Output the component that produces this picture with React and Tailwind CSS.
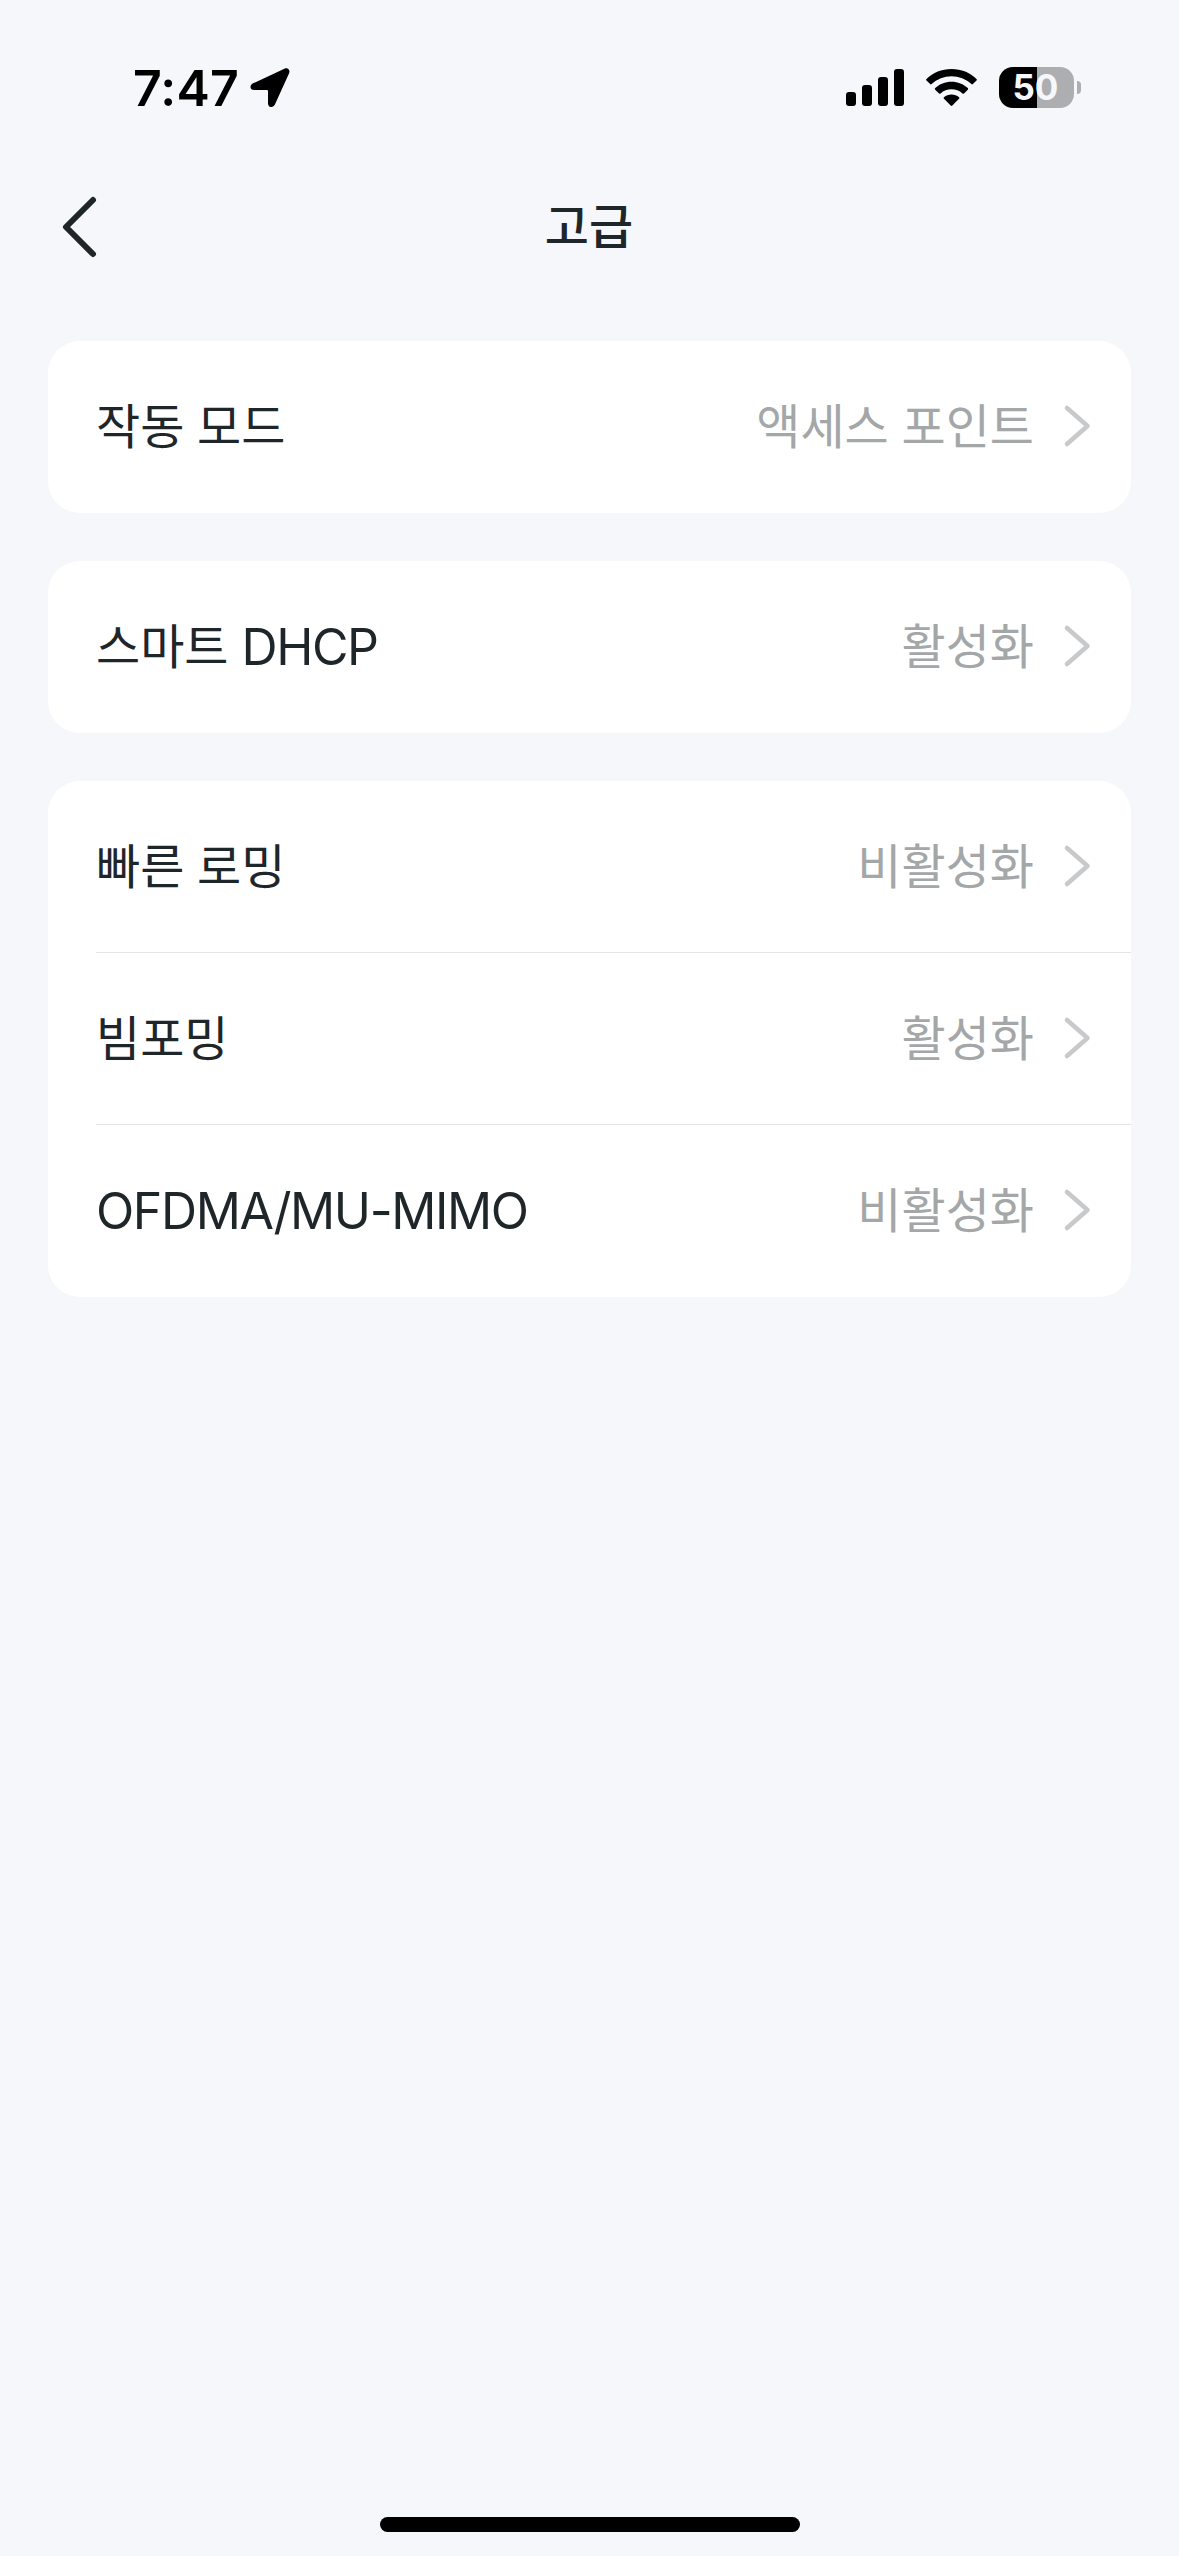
import React from 'react';

const groups = [
  [{ label: '작동 모드', value: '액세스 포인트' }],
  [{ label: '스마트', latin: 'DHCP', value: '활성화' }],
  [
    { label: '빠른 로밍', value: '비활성화' },
    { label: '빔포밍', value: '활성화' },
    { latin: 'OFDMA/MU-MIMO', value: '비활성화' }
  ]
];

const StatusBar = () => (
  <div className="flex h-[176px] items-start justify-between pt-[67px] pr-[98px] pl-[133px] text-black">
    <div className="flex h-[42px] items-center">
      <span className="w-[117px] font-['Inter',sans-serif] text-[50px] leading-[42px] font-semibold tracking-[0.2px] whitespace-nowrap">
        7:47
      </span>
      <svg width="40" height="40" viewBox="0 0 40 40" fill="currentColor">
        <path d="M3.1 15.3 34.4 .8C37.8 -.7 40.5 2 39.1 5.3L24.9 36.6C23.2 40.4 18 39.6 18 35.4V23.1Q18 22 16.9 22H4.2C-.2 22 -.8 17.2 3.1 15.3Z" />
      </svg>
    </div>

    <div className="flex h-[41px] items-center">
      <svg width="58" height="37" viewBox="0 0 58 37" fill="currentColor">
        <rect x="0" y="23" width="10" height="14" rx="3" />
        <rect x="16" y="16" width="10" height="21" rx="3" />
        <rect x="32" y="8" width="10" height="29" rx="3" />
        <rect x="48" y="0" width="10" height="37" rx="3" />
      </svg>
      <svg className="ml-[22px]" width="51" height="37" viewBox="0 0 51 37" fill="currentColor">
        <path d="M25.5 0C35.3 0 44 3.7 50.5 9.9Q51.3 10.7 50.5 11.5L46.9 15.1Q46.2 15.8 45.4 15.1A29 29 0 0 0 5.6 15.1Q4.8 15.8 4.1 15.1L.5 11.5Q-.3 10.7 .5 9.9C7 3.7 15.7 0 25.5 0Z" />
        <path d="M25.5 12.8C31.8 12.8 37.5 15.2 41.8 19.1Q42.6 19.9 41.8 20.7L38 24.4Q37.3 25.1 36.5 24.4A16.5 16.5 0 0 0 14.5 24.4Q13.7 25.1 13 24.4L9.2 20.7Q8.4 19.9 9.2 19.1C13.5 15.2 19.2 12.8 25.5 12.8Z" />
        <path d="M25.5 25.5C28.4 25.5 31 26.5 33 28.2Q33.8 29 33 29.8L26.3 36.5Q25.5 37.3 24.7 36.5L18 29.8Q17.2 29 18 28.2C20 26.5 22.6 25.5 25.5 25.5Z" />
      </svg>
      <div className="ml-[22px] flex h-[41px] w-[75px] items-center justify-center rounded-[14px] bg-linear-to-r from-black from-[51%] to-[#adaeb0] to-[51%] pr-[2px]">
        <span className="font-['Inter',sans-serif] text-[35px] leading-[41px] font-bold text-[#f5f7fb]">50</span>
      </div>
      <div className="ml-[3px] h-[13px] w-1 rounded-r-full bg-[#adaeb0]" />
    </div>
  </div>
);

const Header = () => (
  <header className="grid h-[102px] grid-cols-3 items-center px-[60px]">
    <button type="button" className="justify-self-start text-[#1f262a]">
      <svg
        width="40"
        height="62"
        viewBox="0 0 40 62"
        fill="none"
        stroke="currentColor"
        strokeWidth="6"
        strokeLinecap="round"
        strokeLinejoin="round"
      >
        <path d="M33 4 6 31l27 27" />
      </svg>
    </button>
    <h1 className="pr-[1px] pb-[8px] text-center text-[48px] leading-[60px] font-medium">고급</h1>
  </header>
);

const Row = ({ label, latin, value, last }) => (
  <div className={`ml-12 flex h-[172px] items-center pr-[39px] ${last ? '' : 'border-b border-[#e4e5e6]'}`}>
    <span className="flex flex-1 items-center gap-[13px] whitespace-nowrap">
      {label && <span className="pb-[8px] text-[48px] leading-[60px] [word-spacing:2px]">{label}</span>}
      {latin && (
        <span className="font-['Inter',sans-serif] text-[50px] leading-[60px] tracking-[-1.4px]">{latin}</span>
      )}
    </span>
    <span className="pb-[8px] text-[48px] leading-[60px] text-[#a4a7a8] [word-spacing:2px]">{value}</span>
    <svg
      className="mb-[2px] ml-[28px]"
      width="30"
      height="44"
      viewBox="0 0 30 44"
      fill="none"
      stroke="#c8c9cb"
      strokeWidth="4.5"
      strokeLinecap="round"
      strokeLinejoin="round"
    >
      <path d="m5 4 20.500 18L5 40" />
    </svg>
  </div>
);

const App = () => {
  return (
    <div className="flex h-[2556px] w-[1179px] flex-col bg-[#f5f7fb] font-['Noto_Sans_CJK_KR',sans-serif] text-[#1f262a]">
      <StatusBar />
      <Header />
      <main className="mt-[63px] flex flex-1 flex-col gap-12 px-12">
        {groups.map((rows, i) => (
          <section key={i} className="rounded-[32px] bg-white">
            {rows.map((row, j) => (
              <Row key={j} {...row} last={j === rows.length - 1} />
            ))}
          </section>
        ))}
      </main>
      <div className="mx-auto mb-6 h-[15px] w-[420px] rounded-full bg-black" />
    </div>
  );
};

export default App;
